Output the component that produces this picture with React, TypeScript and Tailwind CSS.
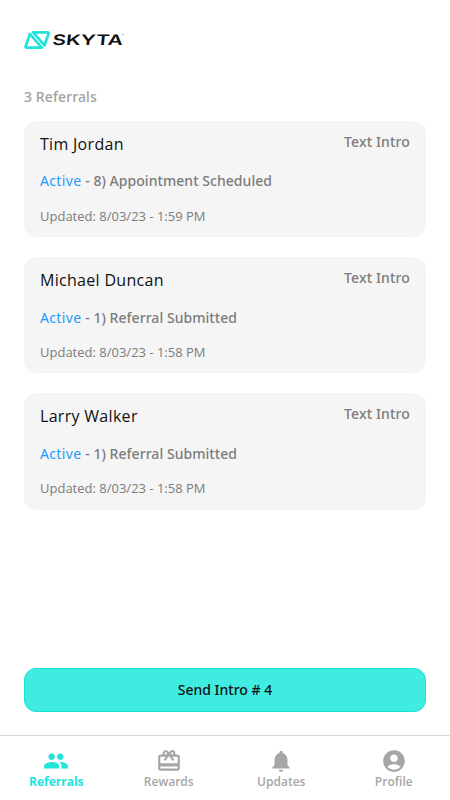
import { MdAccountCircle, MdCardGiftcard, MdNotifications, MdPeople } from "react-icons/md";
import type { IconType } from "react-icons";

type Referral = {
  name: string;
  type: string;
  status: string;
  stage: string;
  updated: string;
};

const REFERRALS: Referral[] = [
  {
    name: "Tim Jordan",
    type: "Text Intro",
    status: "Active",
    stage: "8) Appointment Scheduled",
    updated: "8/03/23 - 1:59 PM",
  },
  {
    name: "Michael Duncan",
    type: "Text Intro",
    status: "Active",
    stage: "1) Referral Submitted",
    updated: "8/03/23 - 1:58 PM",
  },
  {
    name: "Larry Walker",
    type: "Text Intro",
    status: "Active",
    stage: "1) Referral Submitted",
    updated: "8/03/23 - 1:58 PM",
  },
];

type Tab = {
  label: string;
  icon: IconType;
  active?: boolean;
};

const TABS: Tab[] = [
  { label: "Referrals", icon: MdPeople, active: true },
  { label: "Rewards", icon: MdCardGiftcard },
  { label: "Updates", icon: MdNotifications },
  { label: "Profile", icon: MdAccountCircle },
];

function Logo() {
  return (
    <svg width="102" height="20" viewBox="0 0 102 20" aria-label="Skyta">
      {/* two interlocking triangles */}
      <g fill="none" stroke="#22e3da" strokeWidth="2.8" strokeLinejoin="round">
        <path d="M6 4L1.7 16.1Q1.2 17.6 2.7 17.6H18L6 4Z" />
        <path d="M9.2 2.4H23.4Q24.9 2.4 24.5 3.9L20.4 15.5L9.2 2.4Z" />
      </g>
      {/* gap between the two halves */}
      <path d="M6.5 2L20.5 18" stroke="#ffffff" strokeWidth="1" />
      <text
        transform="translate(28 15.3) skewX(-6)"
        textLength="70.5"
        lengthAdjust="spacingAndGlyphs"
        className="fill-[#111111] font-['Inter'] text-[14.5px] font-semibold"
      >
        SKYTA
      </text>
      <text x="97.5" y="7" className="fill-[#777777] font-['Inter'] text-[4px]">
        ™
      </text>
    </svg>
  );
}

function ReferralCard({ referral }: { referral: Referral }) {
  return (
    <article className="h-[116.2px] rounded-xl bg-[#f5f5f5] px-4 pt-[11px]">
      <div className="flex items-start justify-between">
        <h2 className="font-['Open_Sans'] text-base leading-6 tracking-[0.3px] text-[#111111]">
          {referral.name}
        </h2>
        <span className="text-sm leading-5 font-medium tracking-[0.15px] text-[#7c7c7c]">{referral.type}</span>
      </div>
      <p className="mt-[15.4px] text-sm leading-5 font-medium tracking-[0.05px] text-[#7c7c7c]">
        <span className="font-normal tracking-[0.35px] text-[#1b9cff]">{referral.status}</span> - {referral.stage}
      </p>
      <p className="mt-[15.6px] font-['Open_Sans'] text-[13px] leading-[18px] text-[#7c7c7c]">
        Updated: {referral.updated}
      </p>
    </article>
  );
}

export default function App() {
  return (
    <div className="flex h-screen flex-col bg-white font-['Noto_Sans',sans-serif]">
      <header className="flex px-6 pt-[30px]">
        <Logo />
      </header>

      <main className="flex flex-1 flex-col px-6">
        <h1 className="mt-[37px] text-sm leading-5 font-medium tracking-[0.1px] text-[#a0a0a0]">
          {REFERRALS.length} Referrals
        </h1>
        <div className="mt-3.5 flex flex-col gap-5">
          {REFERRALS.map((r) => (
            <ReferralCard key={r.name} referral={r} />
          ))}
        </div>
        <button className="mt-auto mb-[23px] h-11 rounded-xl border border-[#14e3d7] bg-[#40ebe1] text-sm font-medium text-[#111111]">
          Send Intro # 4
        </button>
      </main>

      <nav className="grid h-[65px] grid-cols-4 border-t border-[#dadada] font-['Open_Sans',sans-serif]">
        {TABS.map(({ label, icon: Icon, active }) => (
          <a
            key={label}
            className={`flex flex-col items-center pt-3 text-xs ${
              active ? "font-bold text-[#22e3da]" : "font-semibold text-[#a6a6a6]"
            }`}
          >
            <Icon size={26} />
            <span className="leading-4">{label}</span>
          </a>
        ))}
      </nav>
    </div>
  );
}
